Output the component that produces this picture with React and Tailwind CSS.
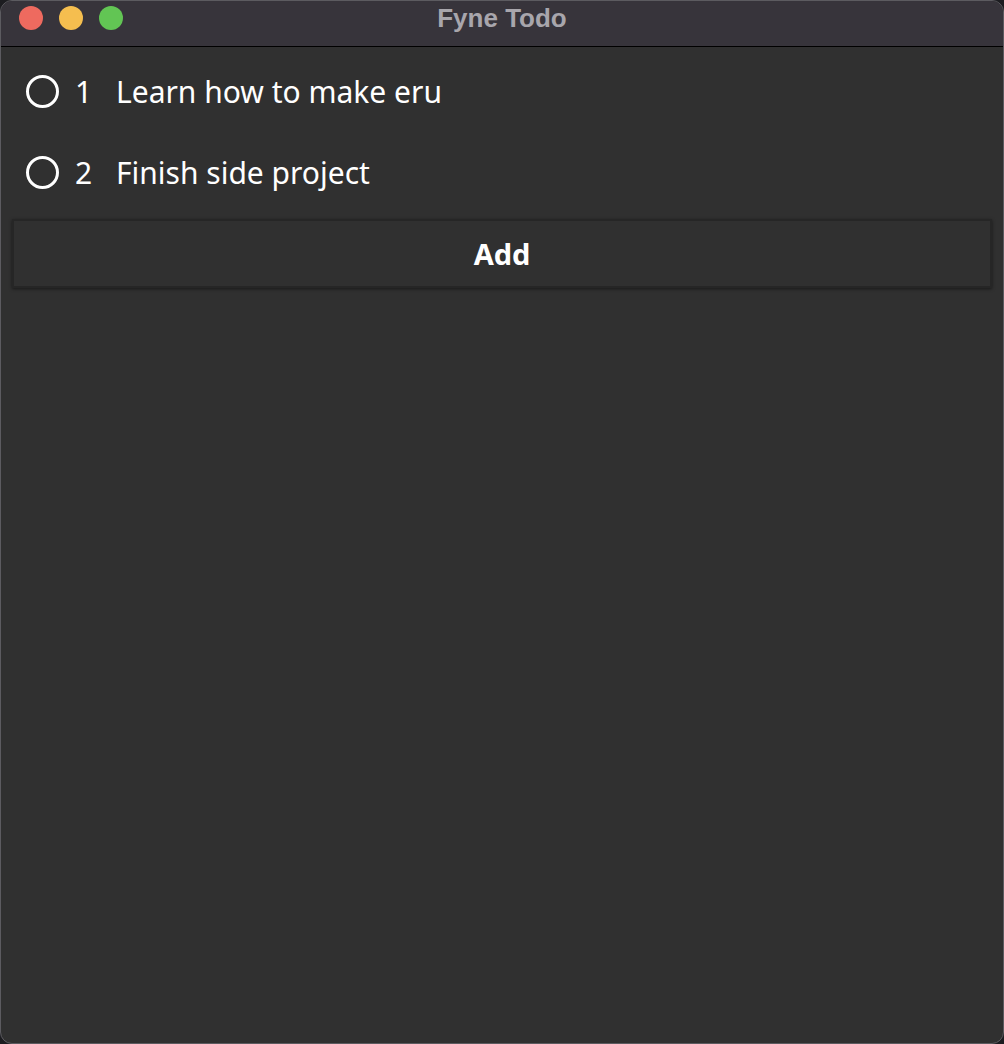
import { useState } from 'react';

const TODOS = [
  { id: 1, title: 'Learn how to make eru' },
  { id: 2, title: 'Finish side project' },
];

function TrafficLights() {
  return (
    <div className="flex items-center gap-4 pl-[18px] pt-[5px]">
      <span className="h-6 w-6 rounded-full bg-[#ee6a5f]" />
      <span className="h-6 w-6 rounded-full bg-[#f5be4f]" />
      <span className="h-6 w-6 rounded-full bg-[#62c554]" />
    </div>
  );
}

function TodoRow({ todo }) {
  return (
    <div className="flex h-[81px] items-center">
      <span className="ml-[25px] h-[33px] w-[33px] shrink-0 rounded-full border-[3px] border-white" />
      <span className="ml-[16px] w-[41px] text-[30px] leading-none text-white">{todo.id}</span>
      <span className="text-[30px] leading-none text-white">{todo.title}</span>
    </div>
  );
}

export default function App() {
  const [todos] = useState(TODOS);

  return (
    <div className="h-[1044px] w-[1004px] bg-[#1c1c20] font-['Noto_Sans',sans-serif]">
      <div className="flex h-full flex-col overflow-hidden rounded-[12px] border border-[#5c5b60] bg-[#303030]">
        <header className="relative flex h-[46px] shrink-0 items-start border-b border-black bg-[#37343b]">
          <TrafficLights />
          <h1 className="absolute inset-x-0 top-[2px] text-center font-['Liberation_Sans',sans-serif] text-[26px] font-bold leading-[30px] text-[#a8a6ac]">
            Fyne Todo
          </h1>
        </header>

        <main className="flex flex-col pt-[4px]">
          {todos.map((todo) => (
            <TodoRow key={todo.id} todo={todo} />
          ))}
          <button
            type="button"
            className="mx-[11px] mt-[6px] h-[69px] border-2 border-[#262626] bg-[#303030] text-[29px] font-bold text-white shadow-[0_1px_3px_rgba(0,0,0,0.5)]"
          >
            Add
          </button>
        </main>
      </div>
    </div>
  );
}
